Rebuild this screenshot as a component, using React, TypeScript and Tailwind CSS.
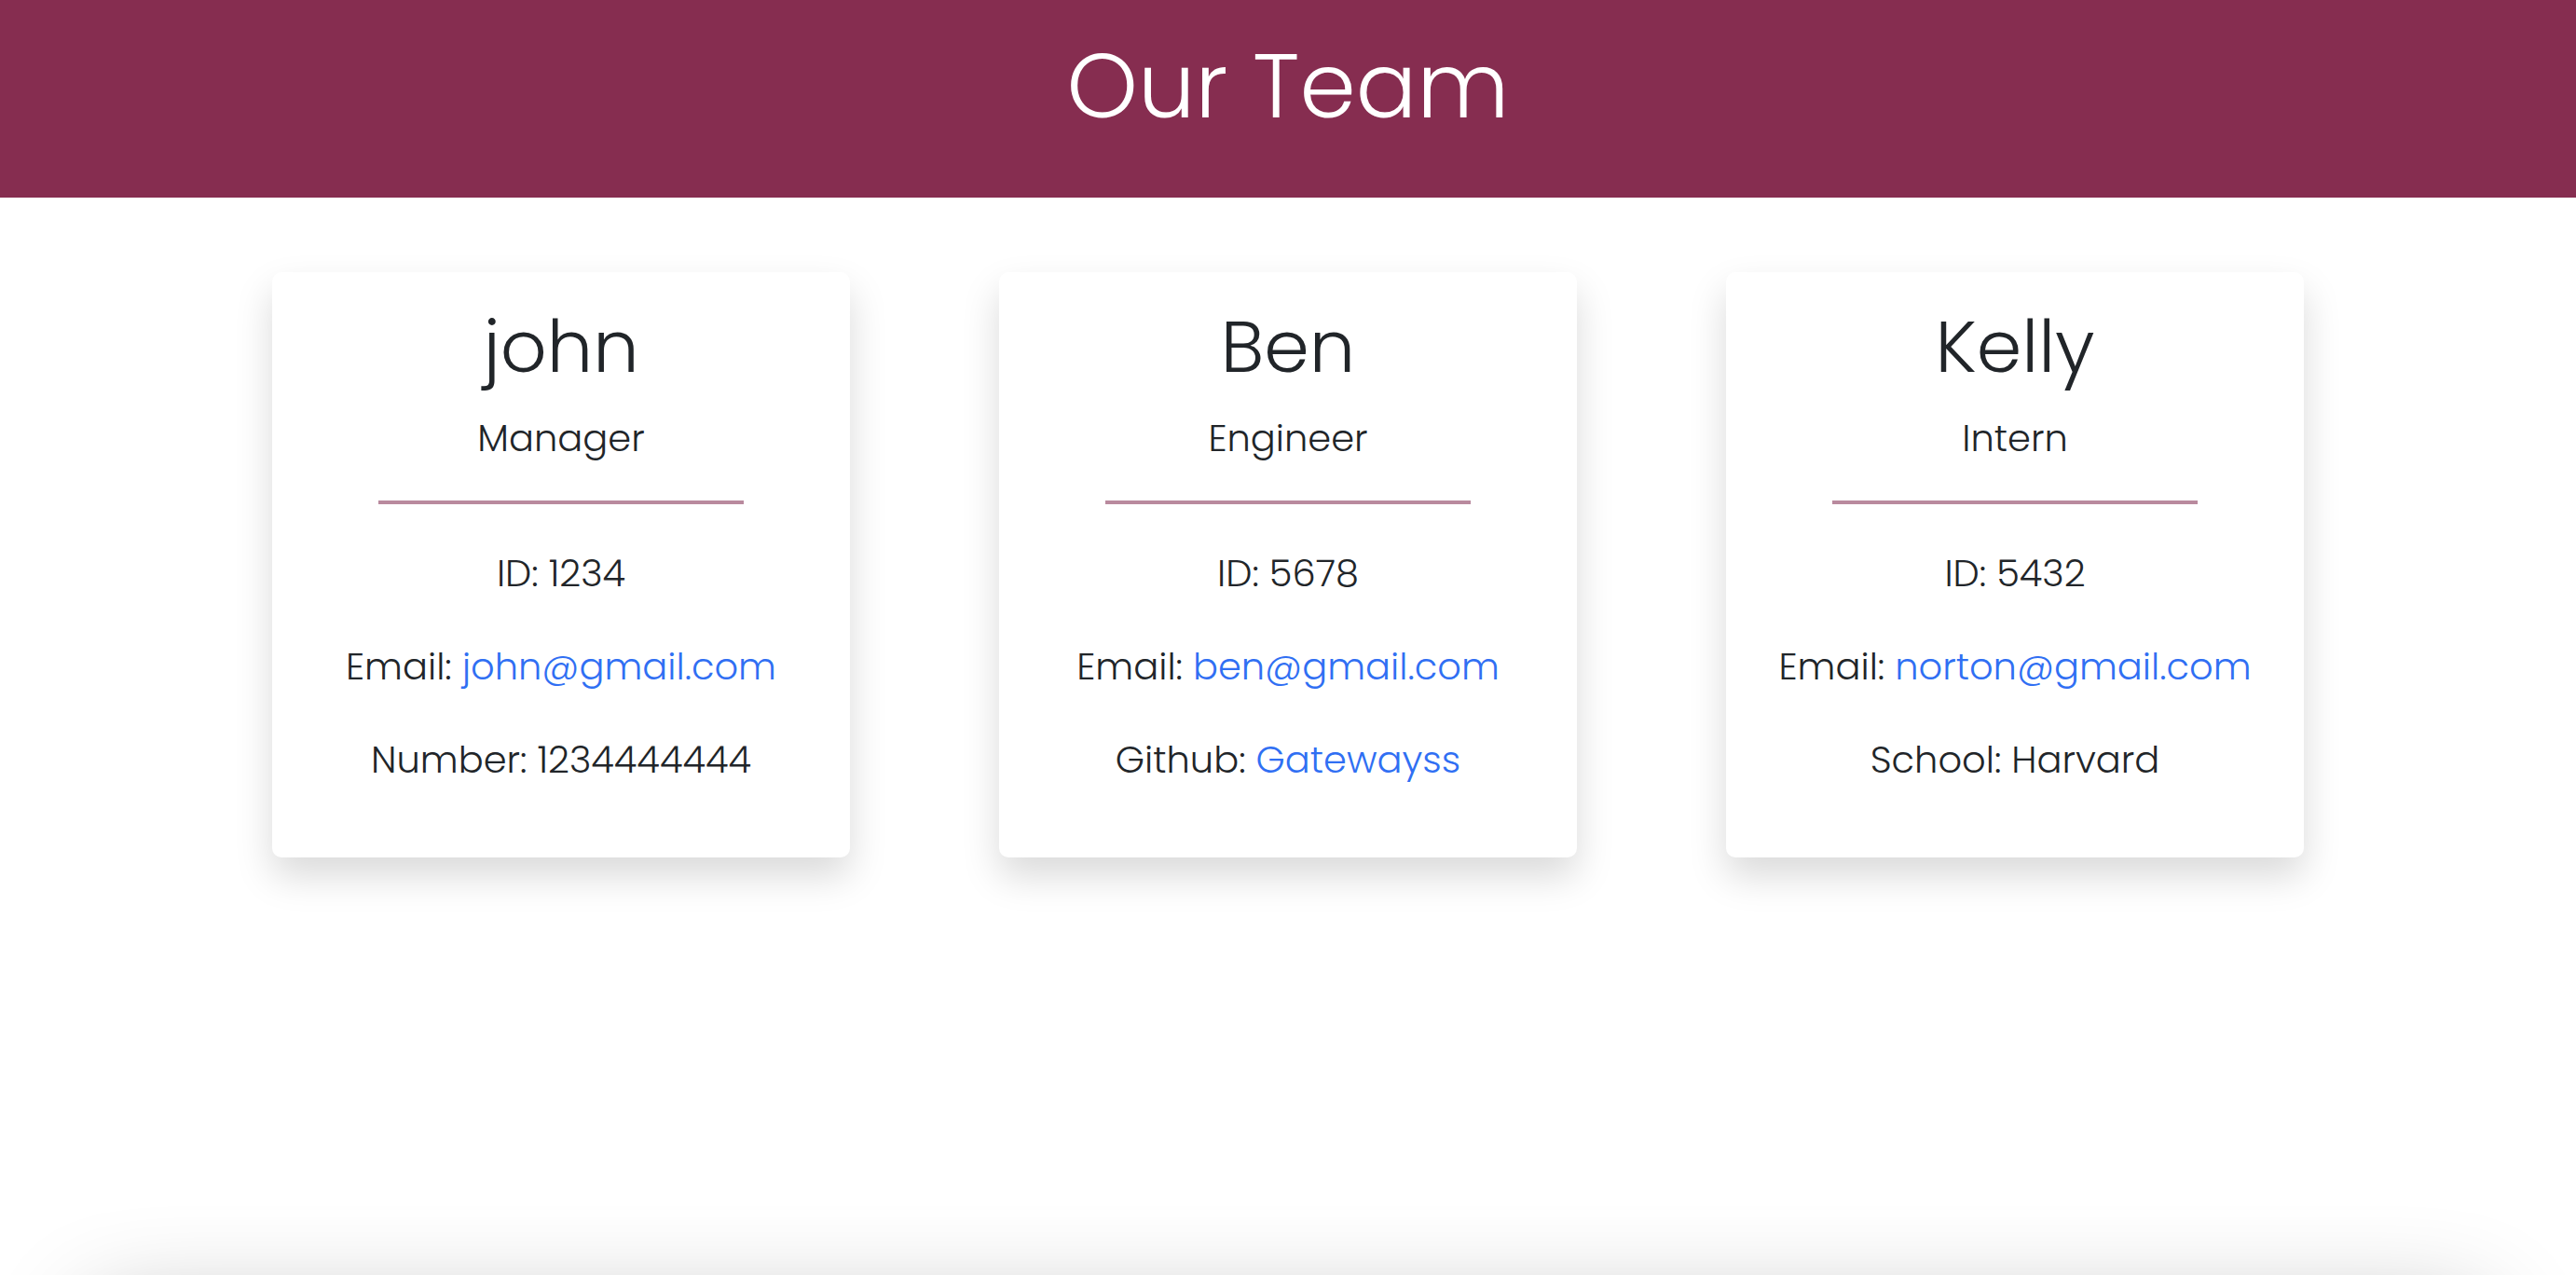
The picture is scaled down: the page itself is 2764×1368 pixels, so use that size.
import React from "react";

type Member = {
  name: string;
  role: string;
  id: string;
  email: string;
  extraLabel: string;
  extraValue: string;
  extraLink: boolean;
};

const members: Member[] = [
  { name: "john", role: "Manager", id: "1234", email: "john@gmail.com", extraLabel: "Number", extraValue: "1234444444", extraLink: false },
  { name: "Ben", role: "Engineer", id: "5678", email: "ben@gmail.com", extraLabel: "Github", extraValue: "Gatewayss", extraLink: true },
  { name: "Kelly", role: "Intern", id: "5432", email: "norton@gmail.com", extraLabel: "School", extraValue: "Harvard", extraLink: false },
];

function Card({ m }: { m: Member }) {
  return (
    <div className="w-[620px] rounded-[10px] bg-white shadow-[0_20px_40px_rgba(0,0,0,0.15)] pt-[32px] pb-[35px] text-center text-[#212529]">
      <h2 className="text-[78px] leading-[96px] font-light">{m.name}</h2>
      <h4 className="mt-[25px] text-[40px] leading-[50px] font-light">{m.role}</h4>
      <div className="mx-auto mt-[42px] w-[392px] h-[4px] bg-[#b98a9e]" />
      <p className="mt-[44px] text-[40px] leading-[60px] font-light">ID: {m.id}</p>
      <p className="mt-[40px] text-[40px] leading-[60px] font-light">
        Email: <a className="text-[#306ff3]" href="#">{m.email}</a>
      </p>
      <p className="mt-[40px] mb-[40px] text-[40px] leading-[60px] font-light">
        {m.extraLabel}:{" "}
        {m.extraLink ? <a className="text-[#306ff3]" href="#">{m.extraValue}</a> : m.extraValue}
      </p>
    </div>
  );
}

export default function App() {
  return (
    <div
      className="h-[1368px] overflow-hidden bg-white flex flex-col"
      style={{ fontFamily: "Poppins, Inter, 'Noto Sans', sans-serif" }}
    >
      <header className="h-[212px] shrink-0 bg-[#862d50] flex justify-center">
        <h1 className="pt-[43px] text-[97px] leading-[98px] font-light text-white">Our Team</h1>
      </header>
      <main className="mt-[80px] flex justify-center gap-[160px] shrink-0">
        {members.map((m) => (
          <Card key={m.name} m={m} />
        ))}
      </main>
      <div className="mt-[448px] mx-[100px] h-[400px] shrink-0 rounded-[10px] bg-white shadow-[0_40px_110px_rgba(0,0,0,0.3)]" />
    </div>
  );
}
